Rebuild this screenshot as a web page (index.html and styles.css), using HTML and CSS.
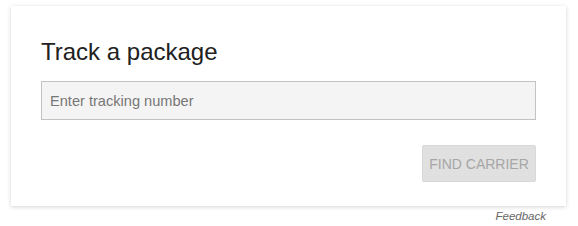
FILE: index.html
```html
<!DOCTYPE html>
<html lang="en">
<head>
  <meta charset="UTF-8" />
  <title>Track a package</title>
  <link rel="stylesheet" href="styles.css">
</head>
<body>
  <div class="page">
    <div class="card">
      <h2>Track a package</h2>
      <input type="text" class="tracking" placeholder="Enter tracking number" />
      <div class="actions">
        <button type="button" disabled>Find carrier</button>
      </div>
    </div>
    <p class="feedback">Feedback</p>
  </div>
</body>
</html>
```

FILE: styles.css
```css
* {
  margin: 0;
  padding: 0;
  box-sizing: border-box;
}

body, html {
  background: #fff;
  font-family: 'Liberation Sans', Arial, sans-serif;
}

.page {
  padding: 6px 12px 0 11px;
}

.card {
  background: #fff;
  box-shadow: 0 1px 4px rgba(0, 0, 0, 0.18);
  padding: 30px 30px 24px 30px;
  height: 200px;
}

h2 {
  font-size: 24px;
  font-weight: normal;
  color: #212121;
  line-height: 32px;
  margin-bottom: 13px;
}

.tracking {
  width: 100%;
  height: 39px;
  border: 1px solid #c2c2c2;
  background: #f4f4f4;
  padding: 0 8px;
  font-size: 14.6px;
  font-family: inherit;
  color: #333;
  outline: none;
}

.tracking::placeholder {
  color: #777;
}

.actions {
  display: flex;
  justify-content: flex-end;
  margin-top: 25px;
}

button {
  width: 114px;
  height: 37px;
  background: #e0e0e0;
  border: 1px solid #d8d8d8;
  border-radius: 2px;
  color: #a6a6a6;
  font-size: 14px;
  font-family: inherit;
  text-transform: uppercase;
}

.feedback {
  text-align: right;
  font-size: 11.5px;
  font-style: italic;
  color: #666;
  padding-right: 20px;
  margin-top: 4px;
}
```
